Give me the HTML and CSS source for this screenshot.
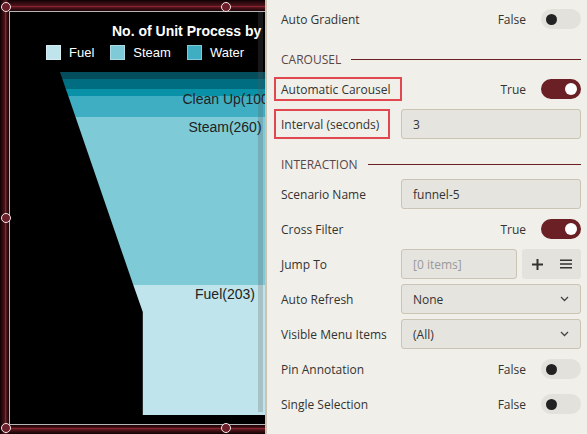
FILE: index.html
```html
<!DOCTYPE html>
<html>
<head>
<meta charset="utf-8">
<link rel="stylesheet" href="styles.css">
</head>
<body>
<div class="stage">
  <div class="chart">
    <svg class="funnel" width="255" height="412" viewBox="10 12 255 412">
      <polygon points="60,72 270,72 270,79 62.4,79" fill="#044d5c"/>
      <polygon points="62.4,79 270,79 270,89 65.8,89" fill="#006d80"/>
      <polygon points="65.8,89 270,89 270,96 68.3,96" fill="#0891a7"/>
      <polygon points="68.3,96 270,96 270,117 75.5,117" fill="#3faec3"/>
      <polygon points="75.5,117 270,117 270,285 133.3,285" fill="#7ecad7"/>
      <polygon points="133.3,285 270,285 270,415 142.8,415 142.8,312" fill="#bfe4eb"/>
      <rect x="258" y="12" width="5" height="400" fill="rgba(90,90,90,0.25)"/>
      <text x="228" y="104" class="flabel">Clean Up(100)</text>
      <text x="225" y="132" class="flabel">Steam(260)</text>
      <text x="225" y="298.5" class="flabel">Fuel(203)</text>
    </svg>
    <div class="title">No. of Unit Process by Type</div>
    <div class="legend">
      <div class="litem"><span class="sw sw-fuel"></span>Fuel</div>
      <div class="litem"><span class="sw sw-steam"></span>Steam</div>
      <div class="litem"><span class="sw sw-water"></span>Water</div>
    </div>
  </div>
  <div class="sel"></div>
  <span class="handle h-tl"></span>
  <span class="handle h-tc"></span>
  <span class="handle h-ml"></span>
  <span class="handle h-bl"></span>
  <span class="handle h-bc"></span>
</div>

<div class="panel">
  <div class="row">
    <span class="label">Auto Gradient</span>
    <div class="tgl-wrap"><span class="tv">False</span><span class="toggle"><span class="knob"></span></span></div>
  </div>

  <div class="section"><span>CAROUSEL</span><i></i></div>

  <div class="row">
    <span class="label"><span class="hl hl-short">Automatic Carousel</span></span>
    <div class="tgl-wrap"><span class="tv">True</span><span class="toggle on"><span class="knob"></span></span></div>
  </div>
  <div class="row">
    <span class="label"><span class="hl hl-tall">Interval (seconds)</span></span>
    <div class="input">3</div>
  </div>

  <div class="section"><span>INTERACTION</span><i></i></div>

  <div class="row">
    <span class="label">Scenario Name</span>
    <div class="input">funnel-5</div>
  </div>
  <div class="row">
    <span class="label">Cross Filter</span>
    <div class="tgl-wrap"><span class="tv">True</span><span class="toggle on"><span class="knob"></span></span></div>
  </div>
  <div class="row">
    <span class="label">Jump To</span>
    <div class="jump">
      <div class="input ph">[0 items]</div>
      <div class="btns">
        <svg width="11" height="11" viewBox="0 0 11 11"><path d="M5.5 0v11M0 5.5h11" stroke="#333" stroke-width="2"/></svg>
        <svg width="12" height="10" viewBox="0 0 12 10"><path d="M0 1.2h12M0 5h12M0 8.8h12" stroke="#333" stroke-width="1.6"/></svg>
      </div>
    </div>
  </div>
  <div class="row">
    <span class="label">Auto Refresh</span>
    <div class="input select">None<svg width="9" height="6" viewBox="0 0 9 6"><path d="M1 1l3.5 3.5L8 1" stroke="#444" stroke-width="1.3" fill="none"/></svg></div>
  </div>
  <div class="row">
    <span class="label">Visible Menu Items</span>
    <div class="input select">(All)<svg width="9" height="6" viewBox="0 0 9 6"><path d="M1 1l3.5 3.5L8 1" stroke="#444" stroke-width="1.3" fill="none"/></svg></div>
  </div>
  <div class="row">
    <span class="label">Pin Annotation</span>
    <div class="tgl-wrap"><span class="tv">False</span><span class="toggle"><span class="knob"></span></span></div>
  </div>
  <div class="row">
    <span class="label">Single Selection</span>
    <div class="tgl-wrap"><span class="tv">False</span><span class="toggle"><span class="knob"></span></span></div>
  </div>
</div>
</body>
</html>
```

FILE: styles.css
```css
* { box-sizing: border-box; }
html, body { margin: 0; padding: 0; }
body {
  width: 587px;
  height: 434px;
  overflow: hidden;
  display: flex;
  background: #f0efea;
}

/* ---------- left: chart stage ---------- */
.stage {
  position: relative;
  width: 265px;
  height: 434px;
  flex: none;
  overflow: hidden;
  padding: 11px 0 9px 9px;
  background:
    linear-gradient(to right, #0f0204 0, #5e1820 6px, #2a070b 8px, transparent 9px),
    linear-gradient(to bottom, #0f0204 0, #5e1820 7px, #2a070b 10px, transparent 11px),
    linear-gradient(to top, #0f0204 0, #5e1820 5px, #2a070b 8px, transparent 9px),
    #1c0508;
}
.chart {
  position: relative;
  height: 414px;
  background: #000;
  border: 1px solid #b5b5b5;
  border-right: none;
  font-family: "Liberation Sans", Arial, sans-serif;
}
.funnel {
  position: absolute;
  left: 0;
  top: 0;
}
.flabel {
  font-family: "Liberation Sans", Arial, sans-serif;
  font-size: 14px;
  fill: #222;
  text-anchor: middle;
}
.title {
  position: relative;
  margin: 11px 0 0 102px;
  white-space: nowrap;
  color: #fff;
  font-weight: bold;
  font-size: 14px;
  line-height: 17px;
}
.legend {
  position: relative;
  display: flex;
  gap: 16px;
  margin: 5px 0 0 36px;
  color: #fff;
  font-size: 13px;
  line-height: 15px;
}
.litem { display: flex; align-items: center; gap: 8px; }
.sw {
  width: 15px;
  height: 15px;
  border: 1px solid rgba(255,255,255,0.35);
}
.sw-fuel { background: #bfe4eb; }
.sw-steam { background: #7ecad7; }
.sw-water { background: #3faec3; }

.sel {
  position: absolute;
  left: 5px;
  top: 6px;
  width: 500px;
  height: 423px;
  border: 1px solid rgba(150, 40, 52, 0.8);
  pointer-events: none;
}
.handle {
  position: absolute;
  width: 10px;
  height: 10px;
  border-radius: 50%;
  background: #6b1f2a;
  border: 1.5px solid #f4e8ea;
}
.h-tl { left: 1px; top: 2px; }
.h-tc { left: 221px; top: 2px; }
.h-ml { left: 1px; top: 213px; }
.h-bl { left: 1px; top: 423px; }
.h-bc { left: 221px; top: 423px; }

/* ---------- right: properties panel ---------- */
.panel {
  flex: 1;
  height: 434px;
  border-left: 2px solid #cbc2b2;
  background: #f0efea;
  padding: 4px 6px 0 14px;
  font-family: "Open Sans", "Noto Sans", sans-serif;
  font-size: 12px;
  color: #333;
}
.row {
  display: grid;
  grid-template-columns: 120px 1fr;
  align-items: center;
  height: 30px;
  margin-bottom: 5px;
}
.label { white-space: nowrap; }
.hl {
  display: inline-flex;
  align-items: center;
  margin-left: -7px;
  padding: 0 9px 0 5px;
  border: 2px solid #e0474e;
}
.hl-short { height: 24px; }
.hl-tall { height: 30px; }

.tgl-wrap {
  display: flex;
  justify-content: flex-end;
  align-items: center;
  gap: 15px;
}
.toggle {
  position: relative;
  width: 40px;
  height: 20px;
  border-radius: 10px;
  background: #e3e1dc;
  display: flex;
  align-items: center;
  padding-left: 5px;
}
.knob {
  width: 11px;
  height: 11px;
  border-radius: 50%;
  background: #222;
}
.toggle.on {
  background: #6b2026;
  justify-content: flex-end;
  padding: 0 4px 0 0;
}
.toggle.on .knob {
  width: 12px;
  height: 12px;
  background: #fff;
}

.section {
  display: flex;
  align-items: center;
  height: 20px;
  margin: 15px 0 5px;
  color: #5a4649;
}
.section i {
  flex: 1;
  height: 1px;
  margin-left: 10px;
  background: #6b2026;
}

.input {
  height: 30px;
  display: flex;
  align-items: center;
  padding: 0 10px 0 11px;
  background: #e6e4df;
  border: 1px solid #cbc3b3;
  border-radius: 3px;
  white-space: nowrap;
}
.input.ph { color: #9a9a9a; }
.select { justify-content: space-between; }
.select svg { margin-right: 1px; }

.jump {
  display: flex;
  gap: 5px;
}
.jump .input { width: 116px; }
.btns {
  flex: 1;
  height: 30px;
  display: flex;
  align-items: center;
  justify-content: space-between;
  padding: 0 9px 0 10px;
  background: #e4e2dd;
  border-radius: 3px;
}
```
